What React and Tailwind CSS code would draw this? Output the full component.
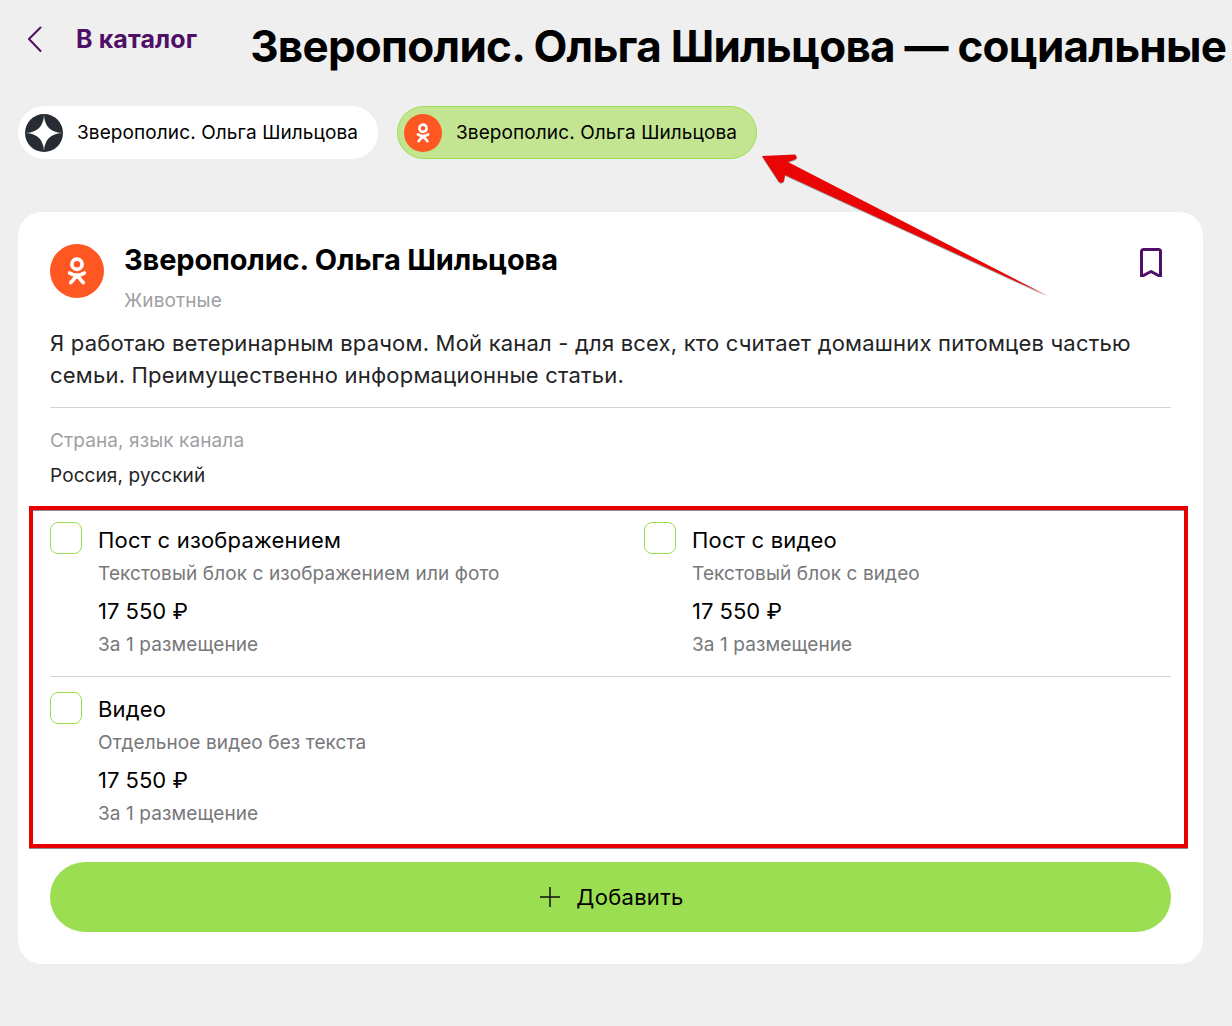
import React from "react";

const font = { fontFamily: "Inter, 'Noto Sans', sans-serif" };

function OkGlyph({ size }) {
  return (
    <svg width={size} height={size} viewBox="0 0 24 24" fill="none" stroke="#fff" strokeLinecap="round">
      <circle cx="12" cy="7.2" r="3.6" strokeWidth="2.6" />
      <path d="M6.800 13.400c3.200 2 7.200 2 10.400 0" strokeWidth="2.6" />
      <path d="M12 15.200l-4.400 5M12 15.200l4.400 5" strokeWidth="2.6" />
    </svg>
  );
}

function ZenIcon() {
  return (
    <svg width="38" height="38" viewBox="0 0 38 38" className="shrink-0">
      <defs>
        <radialGradient id="zenStar" cx="50%" cy="50%" r="50%">
          <stop offset="0%" stopColor="#ffffff" />
          <stop offset="55%" stopColor="#ffffff" />
          <stop offset="100%" stopColor="#7f8185" />
        </radialGradient>
      </defs>
      <circle cx="19" cy="19" r="19" fill="#272b32" />
      <path d="M19 0C19.800 13 25 18.200 38 19C25 19.800 19.800 25 19 38C18.200 25 13 19.800 0 19C13 18.200 18.200 13 19 0Z" fill="url(#zenStar)" />
    </svg>
  );
}

function Option({ title, desc, titleClass }) {
  return (
    <div className="flex items-start gap-4">
      <div className="w-8 h-8 shrink-0 rounded-lg border border-[#9bde52] bg-white" />
      <div className="flex flex-col">
        <div className={titleClass}>{title}</div>
        <div className="text-[19px] leading-[28px] mt-[2px] tracking-[0.1px] text-[#77777a]">{desc}</div>
        <div className="text-[22px] leading-[30px] mt-[8px] text-black">17 550 ₽</div>
        <div className="text-[19px] leading-[28px] mt-[5px] tracking-[0.1px] text-[#77777a]">За 1 размещение</div>
      </div>
    </div>
  );
}

const firstRowTitle = "text-[22px] leading-[36px] tracking-[0.2px] text-black";
const secondRowTitle = "text-[22px] leading-[36px] -mt-[1px] tracking-[0.2px] text-black";

export default function App() {
  return (
    <div className="relative w-[1232px] h-[1026px] overflow-hidden bg-[#efefef]" style={font}>
      <div className="flex items-start pt-[18px] pl-[27px] whitespace-nowrap">
        <svg className="mt-[8px] shrink-0" width="16" height="26" viewBox="0 0 16 26" fill="none" stroke="#4f0f66" strokeWidth="2" strokeLinecap="round" strokeLinejoin="round">
          <path d="M13.500 1.500L2 13l11.500 12" />
        </svg>
        <span className="ml-[33px] mt-[3px] shrink-0 text-[25px] leading-[36px] font-bold tracking-[0.1px] text-[#4f0f66]">В каталог</span>
        <span className="ml-[53px] shrink-0 text-[44px] leading-[56px] font-bold tracking-[-0.75px] text-black">Зверополис. Ольга Шильцова — социальные</span>
      </div>

      <div className="flex gap-[19px] mt-[32px] ml-[18px] text-[19px] tracking-[0.1px] text-black">
        <div className="flex items-center h-[53px] w-[360px] rounded-[27px] bg-white pl-[7px]">
          <ZenIcon />
          <span className="ml-[14px] mt-[2px]">Зверополис. Ольга Шильцова</span>
        </div>
        <div className="flex items-center h-[53px] w-[360px] rounded-[27px] bg-[#c3e592] border border-[#9bde52] pl-[6px]">
          <div className="w-[38px] h-[38px] rounded-full bg-[#ff5722] flex items-center justify-center">
            <OkGlyph size={24} />
          </div>
          <span className="ml-[14px] mt-[2px]">Зверополис. Ольга Шильцова</span>
        </div>
      </div>

      <div className="mt-[53px] ml-[18px] w-[1185px] h-[752px] rounded-[24px] bg-white px-8 pt-8">
        <div className="flex items-start">
          <div className="w-[54px] h-[54px] rounded-full bg-[#ff5722] flex items-center justify-center shrink-0">
            <OkGlyph size={34} />
          </div>
          <div className="ml-5 flex-1">
            <div className="text-[29px] leading-[32px] font-bold tracking-[-0.15px] text-black">Зверополис. Ольга Шильцова</div>
            <div className="mt-[11px] text-[19px] leading-[28px] tracking-[0.1px] text-[#a0a0a3]">Животные</div>
          </div>
          <svg className="mt-[4px] mr-[9px] shrink-0" width="22" height="29" viewBox="0 0 22 29" fill="none" stroke="#4f0f66" strokeWidth="3" strokeLinejoin="round">
            <path d="M1.500 28.500V3.500a2 2 0 0 1 2-2h15a2 2 0 0 1 2 2v25L11 23.500z" />
          </svg>
        </div>
        <p className="mt-[12px] text-[22px] leading-[32px] tracking-[0.2px] text-[#232325]">
          Я работаю ветеринарным врачом. Мой канал - для всех, кто считает домашних питомцев частью
          <br />
          семьи. Преимущественно информационные статьи.
        </p>
        <div className="mt-[16px] h-px bg-[#d4d4d6]" />
        <div className="mt-[19px] text-[19px] leading-[28px] tracking-[0.1px] text-[#a0a0a3]">Страна, язык канала</div>
        <div className="mt-[7px] text-[19px] leading-[28px] tracking-[0.1px] text-[#232325]">Россия, русский</div>

        <div className="mt-[32px] grid grid-cols-[594px_1fr]">
          <Option title="Пост с изображением" desc="Текстовый блок с изображением или фото" titleClass={firstRowTitle} />
          <Option title="Пост с видео" desc="Текстовый блок с видео" titleClass={firstRowTitle} />
        </div>
        <div className="mt-[17px] h-px bg-[#d4d4d6]" />
        <div className="mt-[15px]">
          <Option title="Видео" desc="Отдельное видео без текста" titleClass={secondRowTitle} />
        </div>

        <button className="mt-[34px] flex w-full h-[70px] items-center justify-center gap-[16px] rounded-[35px] bg-[#9bde52] pl-[3px] text-[22px] tracking-[0.3px] text-black">
          <svg width="20" height="20" viewBox="0 0 20 20" stroke="#111" strokeWidth="1.500" fill="none">
            <path d="M10 0v20M0 10h20" />
          </svg>
          Добавить
        </button>
      </div>

      <div className="absolute left-[29px] top-[506px] w-[1159px] h-[342px] border-[4px] border-[#e60000] drop-shadow-[0_1px_0_rgba(0,0,0,0.45)]" />

      <svg className="absolute left-[755px] top-[145px]" width="300" height="155" viewBox="0 0 300 155">
        <path d="M7 11L40 9.500Q43 12 41 14L33 17L293 151L30 30L29 36Q27 39 24 37z" fill="#7a7a7a" transform="translate(0 1)" opacity="0.7" />
        <path d="M7 11L40 9.500Q43 12 41 14L33 17L293 151L30 30L29 36Q27 39 24 37z" fill="#e90505" />
      </svg>
    </div>
  );
}
